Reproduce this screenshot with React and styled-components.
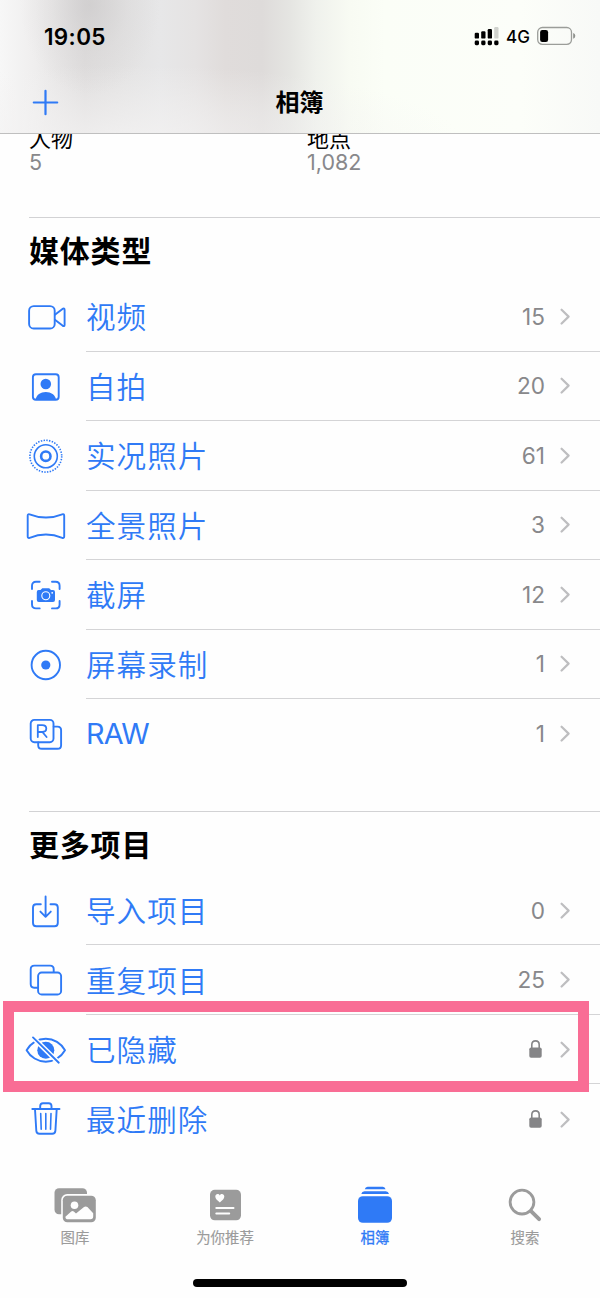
import React from 'react';
import styled, { createGlobalStyle } from 'styled-components';

const BLUE = '#2f7af6';
const GRAY = '#88888b';

const GlobalStyle = createGlobalStyle`
  * { box-sizing: border-box; }
  body { margin: 0; background: #fefefe; }
`;

const Screen = styled.div`
  width: 600px;
  height: 1298px;
  display: flex;
  flex-direction: column;
  overflow: hidden;
  background: #fefefe;
  color: #000;
  font-family: Inter, "Noto Sans CJK SC", sans-serif;
`;

const Header = styled.header`
  height: 134px;
  flex: none;
  display: flex;
  flex-direction: column;
  border-bottom: 1px solid #bfbfbf;
  background:
    radial-gradient(ellipse 70px 90px at 90px 5px, rgba(196, 194, 195, 0.5), rgba(205, 203, 204, 0.2) 55%, rgba(210, 208, 208, 0)),
    radial-gradient(ellipse 330px 75px at 130px 140px, rgba(243, 242, 242, 0.85), rgba(243, 242, 242, 0.4) 55%, rgba(243, 242, 242, 0)),
    linear-gradient(90deg, #f7f7f7 0, #efeeee 35px, #dfdddd 85px, #e3e2e2 120px, #e7e7e8 160px, #e5e3e3 195px, #e0dcdb 225px, #dedbda 262px, #e5e5e2 290px, #eff1ec 315px, #f8fbf3 350px, #fbfef7 385px, #fcfef9 520px, #f8f9f7 600px);
`;

const StatusBar = styled.div`
  height: 72px;
  padding: 0 24px 0 44px;
  display: flex;
  align-items: center;
  justify-content: space-between;
`;

const Clock = styled.span`
  font-size: 22.5px;
  font-weight: 600;
  letter-spacing: 0.35px;
`;

const StatusIcons = styled.div`
  display: flex;
  align-items: center;
  svg { display: block; }
`;

const Network = styled.span`
  width: 24px;
  margin: 2px 7px 0;
  font-size: 17px;
  font-weight: 500;
  white-space: nowrap;
`;

const NavBar = styled.div`
  height: 60px;
  padding: 0 32px;
  display: grid;
  grid-template-columns: 1fr auto 1fr;
  align-items: center;
  svg { display: block; }
`;

const NavTitle = styled.h1`
  margin: 1px 0 0 -1px;
  font-size: 24px;
  line-height: 32px;
  font-weight: 700;
`;

const Content = styled.main`
  height: 1026px;
  flex: none;
  overflow: hidden;
`;

const AlbumSummary = styled.div`
  height: 83px;
  padding: 0 29px;
  display: grid;
  grid-template-columns: 278px 1fr;
`;

const AlbumName = styled.div`
  margin-top: -6px;
  font-size: 22px;
  line-height: 22px;
`;

const AlbumCount = styled.div`
  font-size: 21.5px;
  line-height: 24px;
  color: ${GRAY};
`;

const Section = styled.section`
  margin-bottom: ${(p) => p.$gap || 0}px;
`;

const SectionTitle = styled.h2`
  height: 65px;
  margin: 0 0 0 29px;
  border-top: 1px solid #d2d2d4;
  font-size: 30px;
  line-height: 66px;
  font-weight: 700;
  letter-spacing: 0.8px;
`;

const Row = styled.div`
  position: relative;
  height: 69.5px;
  padding-left: 22px;
  display: flex;
`;

const RowIcon = styled.svg`
  width: 48px;
  height: 40px;
  margin: 15px 16px 0 0;
  flex: none;
  fill: none;
  stroke: ${BLUE};
  stroke-width: 1.9;
  stroke-linecap: round;
  stroke-linejoin: round;
`;

const RowBody = styled.div`
  flex: 1;
  height: 69.5px;
  padding-right: 30px;
  display: flex;
  align-items: center;
  border-bottom: ${(p) => (p.$last ? '0' : '1px solid #d4d4d6')};
  svg { display: block; }
`;

const Label = styled.span`
  flex: 1;
  color: ${BLUE};
  font-size: ${(p) => (p.$latin ? '28.8px' : '29.6px')};
  line-height: 44px;
  padding-top: ${(p) => (p.$latin ? '1px' : '2px')};
  font-weight: ${(p) => (p.$latin ? 400 : 350)};
  letter-spacing: ${(p) => (p.$latin ? '-0.7px' : '1px')};
`;

const Count = styled.span`
  margin-right: 15px;
  padding-top: 1px;
  color: ${GRAY};
  font-size: 22.6px;
  line-height: 28px;
`;

const LockIcon = styled.svg`
  margin-right: 18px;
`;

const Highlight = styled.div`
  position: absolute;
  z-index: 1;
  left: 3px;
  top: -13.7px;
  width: 586px;
  height: 91px;
  border: 11px solid #f96d95;
`;

const TabBar = styled.nav`
  height: 105px;
  padding-top: 22px;
  display: grid;
  grid-template-columns: repeat(4, 1fr);
`;

const Tab = styled.div`
  display: flex;
  flex-direction: column;
  align-items: center;
  color: ${(p) => (p.$active ? BLUE : '#9b9b9b')};
  font-size: 14.4px;
  line-height: 20px;
  -webkit-text-stroke: ${(p) => (p.$active ? '0.3px' : '0.15px')} currentColor;
  svg { display: block; margin-bottom: 4px; }
`;

const HomeIndicator = styled.div`
  width: 214px;
  height: 7.5px;
  margin: 14px auto 0;
  border-radius: 4px;
  background: #000;
`;

const icons = {
  video: (
    <>
      <rect x="7.1" y="9.1" width="25.6" height="22.4" rx="4.6" />
      <path d="M32.9 17.8 40.5 11.9Q42.6 10.7 42.6 13V27.7Q42.6 30 40.5 28.6L32.9 22.8" />
    </>
  ),
  selfie: (
    <>
      <rect x="10.9" y="7.3" width="25.8" height="25.4" rx="3" />
      <circle cx="23.8" cy="17" r="5.3" fill={BLUE} stroke="none" />
      <path d="M13.5 32.7C14.4 27.8 18.5 25 23.8 25S33.2 27.8 34.1 32.7Z" fill={BLUE} stroke="none" />
    </>
  ),
  live: (
    <>
      <circle cx="23.8" cy="20.2" r="15.9" strokeWidth="1.6" strokeDasharray="1.45 1.325" strokeLinecap="butt" />
      <circle cx="23.8" cy="20.2" r="11.5" strokeWidth="1.6" />
      <circle cx="23.8" cy="20.2" r="4.7" strokeWidth="2.6" />
    </>
  ),
  panorama: (
    <path d="M7.6 8.3Q24 14.8 40.2 8.3Q42.2 7.7 42.2 9.8V30.5Q42.2 32.5 40.2 31.8Q24 25.2 7.6 31.8Q5.7 32.5 5.7 30.5V9.8Q5.7 7.7 7.6 8.3Z" />
  ),
  screenshot: (
    <>
      <path d="M10 14V10.8Q10 6.8 14 6.8H17.7M30 6.8H33.6Q37.6 6.8 37.6 10.8V14M37.6 26V29.4Q37.6 33.4 33.6 33.4H30M17.7 33.4H14Q10 33.4 10 29.4V26" />
      <path d="M16.5 14.9H18.5L20.3 13.3H27.2L29 14.9H31Q33 14.9 33 16.9V25Q33 27 31 27H16.8Q14.8 27 14.8 25V16.9Q14.8 14.9 16.5 14.9Z" fill={BLUE} stroke="none" />
      <circle cx="23.8" cy="20.8" r="4" stroke="#fff" strokeWidth="1.1" />
      <circle cx="30.2" cy="17.8" r="0.9" fill="#fff" stroke="none" />
    </>
  ),
  record: (
    <>
      <circle cx="23.8" cy="20" r="14.2" />
      <circle cx="23.8" cy="20" r="4.6" fill={BLUE} stroke="none" />
    </>
  ),
  raw: (
    <>
      <rect x="8.7" y="5.9" width="22.8" height="22.3" rx="3.6" />
      <path d="M31.7 12.6H35.5Q39.1 12.6 39.1 16.2V31.2Q39.1 34.8 35.5 34.8H19.8Q16.2 34.8 16.2 31.2V28.4" />
      <path d="M15.8 23V11.2H20.2Q24.3 11.2 24.3 14.6T20.2 18H15.8M20.4 18 24.6 23" strokeWidth="1.8" />
    </>
  ),
  importItems: (
    <>
      <path d="M18.8 13.2H14.3Q11 13.2 11 16.5V32Q11 35.3 14.3 35.3H32.5Q35.8 35.3 35.8 32V16.5Q35.8 13.2 32.5 13.2H28.5" />
      <path d="M23.6 5.5V25.5M18.4 20.6 23.6 25.8 28.8 20.6" />
    </>
  ),
  duplicates: (
    <>
      <path d="M15.8 27.7H12.1Q8.7 27.7 8.7 24.1V9.2Q8.7 5.6 12.3 5.6H28.1Q31.7 5.6 31.7 9.2V12" />
      <rect x="16.1" y="12.5" width="23" height="22" rx="3.6" />
    </>
  ),
  hidden: (
    <>
      <path d="M4.6 20.2C8.4 13.4 15.8 8.7 23.8 8.7S39.2 13.4 43 20.2C39.2 27 31.8 31.7 23.8 31.7S8.4 27 4.6 20.2Z" />
      <circle cx="23.8" cy="20.2" r="8.5" fill={BLUE} stroke="none" />
      <path d="M10.5 7 37 33" stroke="#fff" strokeWidth="5" strokeLinecap="butt" />
      <path d="M11 7.4 36.8 32.7" />
    </>
  ),
  trash: (
    <>
      <path d="M10.3 10H37.5M18.2 9.7V7.1Q18.2 4.2 21 4.2H26.7Q29.5 4.2 29.5 7.1V9.7" />
      <path d="M13 10.3 14.3 31.8Q14.5 34.8 17.5 34.8H30.2Q33.2 34.8 33.4 31.8L34.7 10.3" />
      <path d="M18.7 14.5 19.2 30.2M23.8 14.5V30.2M29 14.5 28.5 30.2" strokeWidth="1.6" />
    </>
  ),
};

const Chevron = () => (
  <svg width="10" height="17" viewBox="0 0 10 17" fill="none" stroke="#bebec0" strokeWidth="2.2" strokeLinecap="round" strokeLinejoin="round">
    <path d="M1.6 1.7 8.6 8.6 1.6 15.5" />
  </svg>
);

const Lock = () => (
  <LockIcon width="13" height="19" viewBox="0 0 13 19">
    <rect x="0.3" y="7.5" width="12.4" height="10.2" rx="1.8" fill="#858587" />
    <path d="M2.8 8.5V4.7Q2.8 0.9 6.5 0.9T10.2 4.7V8.5" fill="none" stroke="#858587" strokeWidth="1.6" />
  </LockIcon>
);

const mediaTypes = [
  { icon: 'video', label: '视频', count: '15' },
  { icon: 'selfie', label: '自拍', count: '20' },
  { icon: 'live', label: '实况照片', count: '61' },
  { icon: 'panorama', label: '全景照片', count: '3' },
  { icon: 'screenshot', label: '截屏', count: '12' },
  { icon: 'record', label: '屏幕录制', count: '1' },
  { icon: 'raw', label: 'RAW', count: '1', latin: true },
];

const utilities = [
  { icon: 'importItems', label: '导入项目', count: '0' },
  { icon: 'duplicates', label: '重复项目', count: '25' },
  { icon: 'hidden', label: '已隐藏', highlighted: true },
  { icon: 'trash', label: '最近删除' },
];

function AlbumList({ title, items, gap }) {
  return (
    <Section $gap={gap}>
      <SectionTitle>{title}</SectionTitle>
      {items.map((item, i) => (
        <Row key={item.label}>
          <RowIcon viewBox="0 0 48 40">{icons[item.icon]}</RowIcon>
          <RowBody $last={i === items.length - 1}>
            <Label $latin={item.latin}>{item.label}</Label>
            {item.count ? <Count>{item.count}</Count> : <Lock />}
            <Chevron />
          </RowBody>
          {item.highlighted && <Highlight />}
        </Row>
      ))}
    </Section>
  );
}

const LibraryIcon = () => (
  <svg width="44" height="42" viewBox="0 0 44 42">
    <rect x="1.5" y="6.3" width="32.5" height="26" rx="4.5" fill="#9b9b9b" />
    <rect x="8.2" y="12" width="36" height="30" rx="6" fill="#fefefe" />
    <rect x="9.8" y="13.8" width="33" height="26.4" rx="4.5" fill="#9b9b9b" />
    <circle cx="21.5" cy="23.3" r="3.8" fill="#fefefe" />
    <path d="M12.4 34.7 18.2 29.5Q19.5 28.4 20.8 29.5L23 31.5 31 25Q32.7 23.8 34.4 25L40.2 31.2V34.5Q40.2 37.3 37.4 37.3H15.2Q12.4 37.3 12.4 34.7Z" fill="#fefefe" />
  </svg>
);

const ForYouIcon = () => (
  <svg width="44" height="42" viewBox="0 0 44 42">
    <rect x="7" y="7.8" width="31" height="30.5" rx="4.8" fill="#9b9b9b" />
    <path d="M16.8 20.5C14 18.3 12.3 16.8 12.3 14.6C12.3 11.6 15.6 10.9 16.8 13.4C18 10.9 21.3 11.6 21.3 14.6C21.3 16.8 19.6 18.3 16.8 20.5Z" fill="#fefefe" />
    <path d="M13.3 26.1H30.5M13.3 31.6H26.2" stroke="#fefefe" strokeWidth="2" strokeLinecap="round" />
  </svg>
);

const AlbumsIcon = () => (
  <svg width="44" height="42" viewBox="0 0 44 42" fill={BLUE}>
    <path d="M11.8 7.2Q12.4 4.7 14.6 4.7H29.8Q32 4.7 32.6 7.2ZM8.3 12Q8.9 9.3 11.5 9.3H32.8Q35.4 9.3 36 12Z" />
    <rect x="5" y="14.2" width="34" height="26.6" rx="4.8" />
  </svg>
);

const SearchIcon = () => (
  <svg width="44" height="42" viewBox="0 0 44 42" fill="none" stroke="#9b9b9b" strokeLinecap="round">
    <circle cx="19" cy="20.1" r="11.9" strokeWidth="2.8" />
    <path d="M28 29.2 36.1 37.2" strokeWidth="3.9" />
  </svg>
);

export default function App() {
  return (
    <Screen>
      <GlobalStyle />
      <Header>
        <StatusBar>
          <Clock>19:05</Clock>
          <StatusIcons>
            <svg width="25" height="20" viewBox="0 0 25 20">
              <rect x="0.7" y="6.8" width="4.3" height="5.8" rx="1.2" />
              <rect x="7.2" y="5.2" width="4.3" height="7.4" rx="1.2" />
              <rect x="13.7" y="3" width="4.3" height="9.6" rx="1.2" />
              <rect x="20.2" y="1" width="4.3" height="11.6" rx="1.2" fill="#d0d2cd" />
              {[0.7, 7.2, 13.7, 20.2].map((x) => (
                <rect key={x} x={x} y="14.6" width="4.3" height="4.6" rx="1.4" />
              ))}
            </svg>
            <Network>4G</Network>
            <svg width="39" height="20" viewBox="0 0 39 20">
              <rect x="0.7" y="1.5" width="33.8" height="16.8" rx="4.7" fill="none" stroke="#9b9d99" strokeWidth="1.3" />
              <rect x="3.1" y="4" width="8" height="12" rx="2.2" />
              <path d="M36.2 7Q38.3 7.5 38.3 9.8T36.2 12.7Z" fill="#8f918d" />
            </svg>
          </StatusIcons>
        </StatusBar>
        <NavBar>
          <svg width="27" height="27" viewBox="0 0 27 27" stroke={BLUE} strokeWidth="2.2" strokeLinecap="round">
            <path d="M13.5 1.8V25.2M1.8 13.5H25.2" />
          </svg>
          <NavTitle>相簿</NavTitle>
        </NavBar>
      </Header>
      <Content>
        <AlbumSummary>
          <div>
            <AlbumName>人物</AlbumName>
            <AlbumCount>5</AlbumCount>
          </div>
          <div>
            <AlbumName>地点</AlbumName>
            <AlbumCount>1,082</AlbumCount>
          </div>
        </AlbumSummary>
        <AlbumList title="媒体类型" items={mediaTypes} gap={42.4} />
        <AlbumList title="更多项目" items={utilities} />
      </Content>
      <TabBar>
        <Tab><LibraryIcon />图库</Tab>
        <Tab><ForYouIcon />为你推荐</Tab>
        <Tab $active><AlbumsIcon />相簿</Tab>
        <Tab><SearchIcon />搜索</Tab>
      </TabBar>
      <HomeIndicator />
    </Screen>
  );
}
